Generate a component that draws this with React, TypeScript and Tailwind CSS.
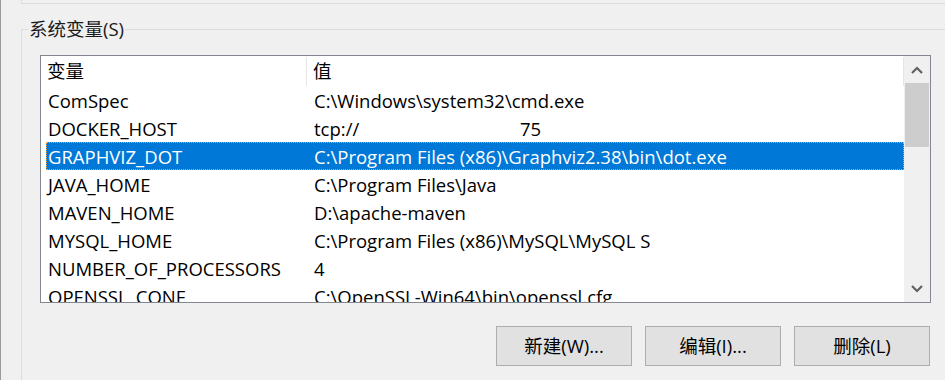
import React from 'react';

const rows = [
  { name: 'ComSpec', value: 'C:\\Windows\\system32\\cmd.exe' },
  { name: 'DOCKER_HOST', value: 'tcp://', tail: '75' },
  { name: 'GRAPHVIZ_DOT', value: 'C:\\Program Files (x86)\\Graphviz2.38\\bin\\dot.exe', selected: true },
  { name: 'JAVA_HOME', value: 'C:\\Program Files\\Java' },
  { name: 'MAVEN_HOME', value: 'D:\\apache-maven' },
  { name: 'MYSQL_HOME', value: 'C:\\Program Files (x86)\\MySQL\\MySQL S' },
  { name: 'NUMBER_OF_PROCESSORS', value: '4' },
  { name: 'OPENSSL_CONF', value: 'C:\\OpenSSL-Win64\\bin\\openssl.cfg' },
];

function Chevron({ down }: { down?: boolean }) {
  return (
    <svg width="12" height="8" viewBox="0 0 12 8" className={down ? 'rotate-180' : ''}>
      <path d="M1 7 L6 2 L11 7" fill="none" stroke="#606060" strokeWidth="2.2" />
    </svg>
  );
}

export default function App() {
  return (
    <div
      className="w-[945px] h-[380px] bg-[#f0f0f0] border-l border-[#9a9a9a] overflow-hidden text-[18.5px] text-black"
      style={{ fontFamily: '"Open Sans", "Noto Sans CJK SC", sans-serif' }}
    >
      <div className="ml-[20px] h-[4px] border-l border-b border-[#dcdcdc]" />

      <div className="ml-[20px] mt-[25px] h-[360px] border-l border-t border-[#dcdcdc]">
        <div className="-mt-[12px] ml-[6px] w-fit px-[1px] bg-[#f0f0f0] leading-[22px] text-[#1a1a1a]">
          系统变量(S)
        </div>

        <div className="mt-[15px] ml-[18px] w-[891px] h-[248px] border border-[#828790] bg-white flex">
          <div className="flex-1 overflow-hidden">
            <div className="flex h-[30px] items-center">
              <div className="w-[266px] h-[29px] border-r border-[#e5e5e5] pl-[6px] flex items-center">变量</div>
              <div className="flex-1 h-[29px] border-r border-[#e5e5e5] pl-[6px] flex items-center">值</div>
            </div>
            {rows.map((r) => (
              <div
                key={r.name}
                className={
                  'ml-[5px] h-[28px] pt-[2px] flex items-center whitespace-nowrap ' +
                  (r.selected ? 'bg-[#0078d7] text-white border border-dotted border-[#f0a040]' : 'border border-transparent')
                }
              >
                <div className="w-[261px] pl-[1px]">{r.name}</div>
                <div className="flex-1 pl-[6px] flex">
                  <span className={r.tail ? 'w-[206px]' : ''}>{r.value}</span>
                  {r.tail && <span>{r.tail}</span>}
                </div>
              </div>
            ))}
          </div>

          <div className="w-[26px] bg-[#f0f0f0] flex flex-col">
            <div className="h-[27px] flex items-center justify-center">
              <Chevron />
            </div>
            <div className="h-[64px] mx-[1px] bg-[#cdcdcd]" />
            <div className="flex-1" />
            <div className="h-[27px] flex items-center justify-center">
              <Chevron down />
            </div>
          </div>
        </div>

        <div className="mt-[23px] flex justify-end gap-[13px] pr-[15px]">
          {['新建(W)...', '编辑(I)...', '删除(L)'].map((t) => (
            <button
              key={t}
              className="w-[136px] h-[40px] bg-[#e1e1e1] border border-[#adadad] flex items-center justify-center"
            >
              {t}
            </button>
          ))}
        </div>
      </div>
    </div>
  );
}
